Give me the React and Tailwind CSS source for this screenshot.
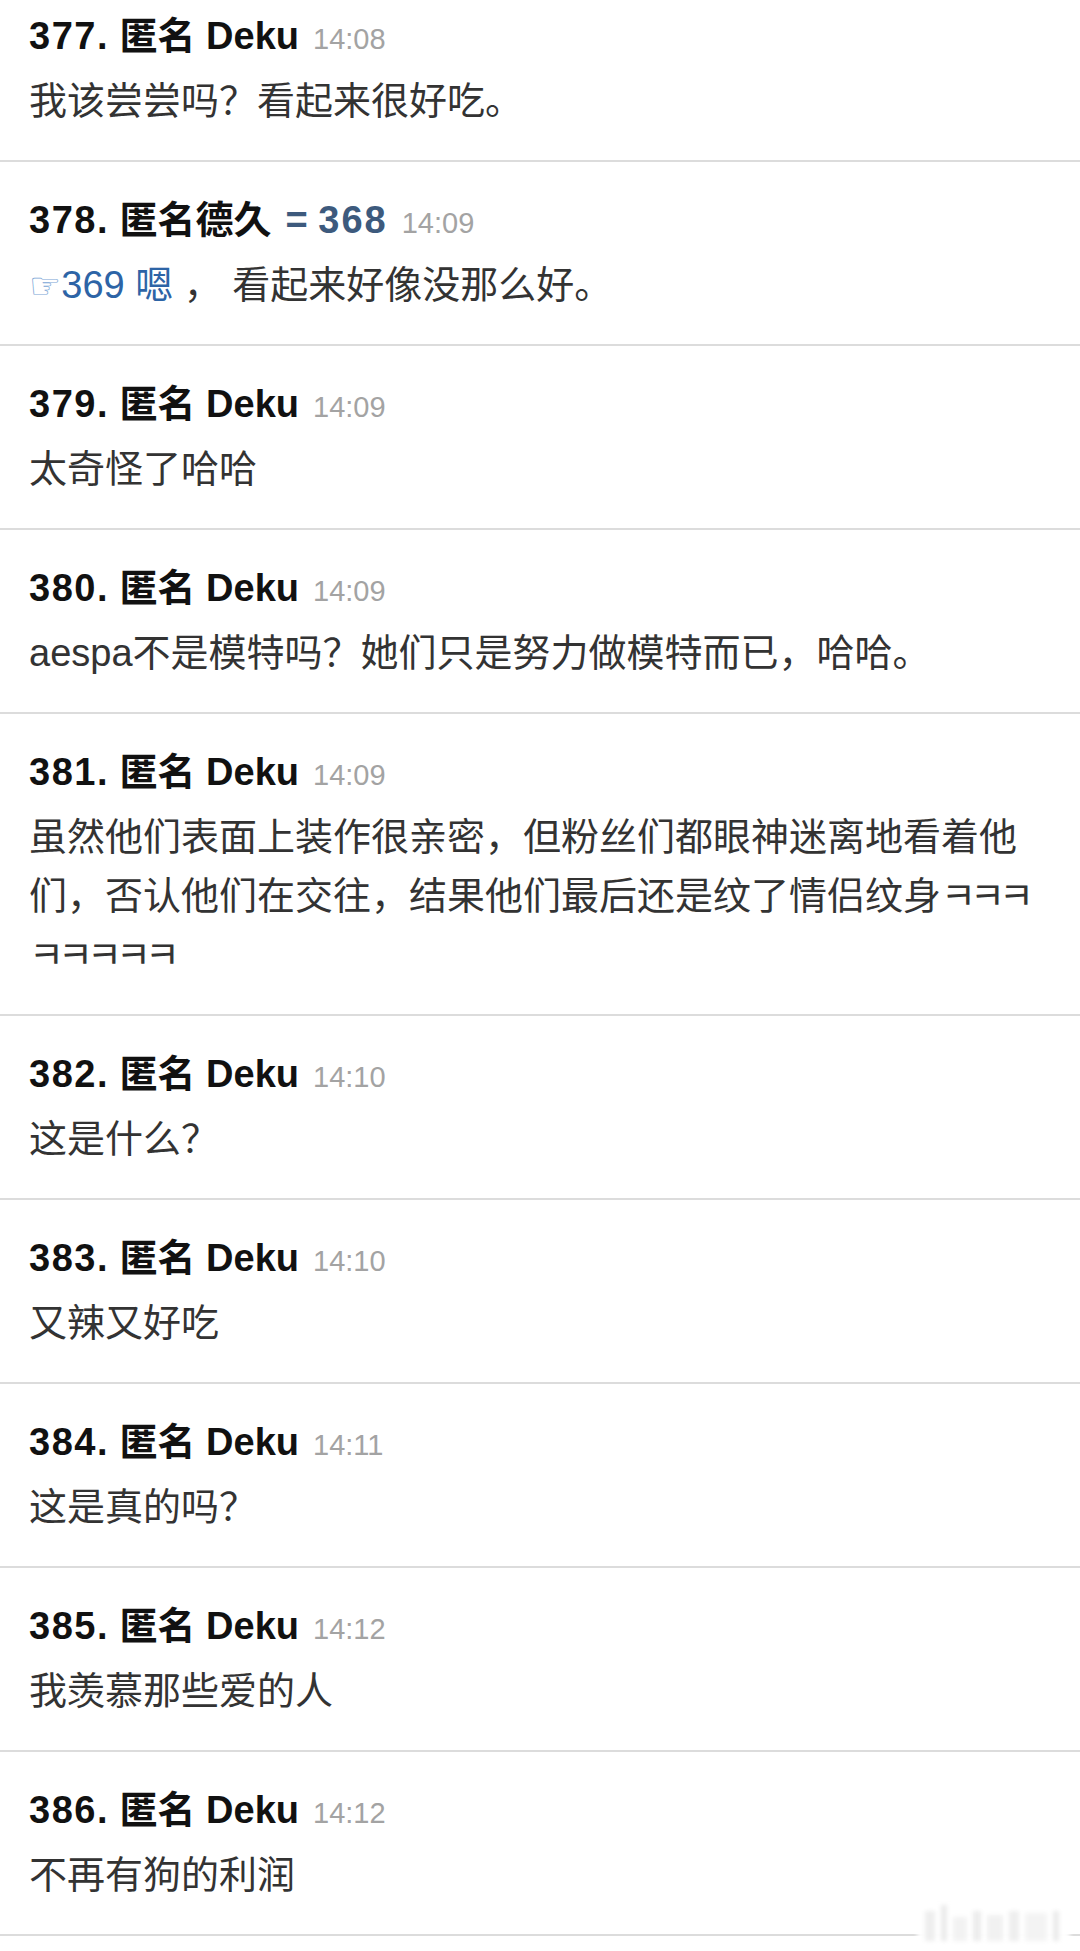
import React from "react";

const posts = [
  { no: 377, name: "匿名 Deku", time: "14:08", body: "我该尝尝吗？看起来很好吃。" },
  { no: 378, name: "匿名德久", reply: "368", time: "14:09", quote: "369 嗯", body: " ， 看起来好像没那么好。" },
  { no: 379, name: "匿名 Deku", time: "14:09", body: "太奇怪了哈哈" },
  { no: 380, name: "匿名 Deku", time: "14:09", body: "aespa不是模特吗？她们只是努力做模特而已，哈哈。" },
  {
    no: 381,
    name: "匿名 Deku",
    time: "14:09",
    body: "虽然他们表面上装作很亲密，但粉丝们都眼神迷离地看着他们，否认他们在交往，结果他们最后还是纹了情侣纹身",
    laugh: 8,
  },
  { no: 382, name: "匿名 Deku", time: "14:10", body: "这是什么？" },
  { no: 383, name: "匿名 Deku", time: "14:10", body: "又辣又好吃" },
  { no: 384, name: "匿名 Deku", time: "14:11", body: "这是真的吗？" },
  { no: 385, name: "匿名 Deku", time: "14:12", body: "我羡慕那些爱的人" },
  { no: 386, name: "匿名 Deku", time: "14:12", body: "不再有狗的利润" },
];

const Post = ({ post }) => (
  <div className="border-b-2 border-[#dcdcdc] pt-[34px] pb-[29px] pl-[29px] pr-[29px]">
    {/* header */}
    <div className="h-[48px] leading-[48px] whitespace-nowrap font-['Liberation_Sans','Noto_Sans_CJK_SC',sans-serif]">
      <span className="text-[38px] font-bold text-[#111]">
        <span className="tracking-[1.5px]">{post.no}.</span> {post.name}
      </span>
      {post.reply && (
        <span className="ml-[14px] text-[38px] font-bold text-[#3d5a7d]">
          = <span className="tracking-[2px]">{post.reply}</span>
        </span>
      )}
      <span className="ml-[14px] text-[29px] text-[#a3a3a3]">{post.time}</span>
    </div>

    {/* body */}
    <p className="mt-[12px] text-[38px] leading-[59px] text-[#333] font-['Liberation_Sans','Noto_Sans_CJK_SC',sans-serif]">
      {post.quote && (
        <span className="text-[#2d64a6]">
          <span className="text-[36px] font-['DejaVu_Sans',sans-serif] text-[#7aa6d6]">☞</span>
          {post.quote}
        </span>
      )}
      {post.body}
      {post.laugh &&
        Array.from({ length: post.laugh }).map((_, i) => (
          <span key={i} className="tracking-[-6px]">
            ㅋ
          </span>
        ))}
    </p>
  </div>
);

export default function App() {
  return (
    <div className="relative min-h-screen w-[1080px] overflow-hidden bg-white">
      <div className="-mt-[22px]">
        {posts.map((p) => (
          <Post key={p.no} post={p} />
        ))}
      </div>

      {/* faint watermark, bottom right */}
      <div className="absolute left-[917px] top-[1903px] flex h-[38px] w-[153px] items-end gap-[6px] bg-white/95 px-[8px] blur-[2px]">
        <div className="h-[30px] w-[10px] bg-[#eeeeee]" />
        <div className="h-[36px] w-[6px] bg-[#ebebeb]" />
        <div className="h-[24px] w-[14px] bg-[#f2f2f2]" />
        <div className="h-[30px] w-[8px] bg-[#ececec]" />
        <div className="h-[26px] w-[16px] bg-[#f1f1f1]" />
        <div className="h-[30px] w-[10px] bg-[#eeeeee]" />
        <div className="h-[28px] w-[22px] bg-[#f3f3f3]" />
        <div className="h-[30px] w-[6px] bg-[#ebebeb]" />
      </div>
    </div>
  );
}
